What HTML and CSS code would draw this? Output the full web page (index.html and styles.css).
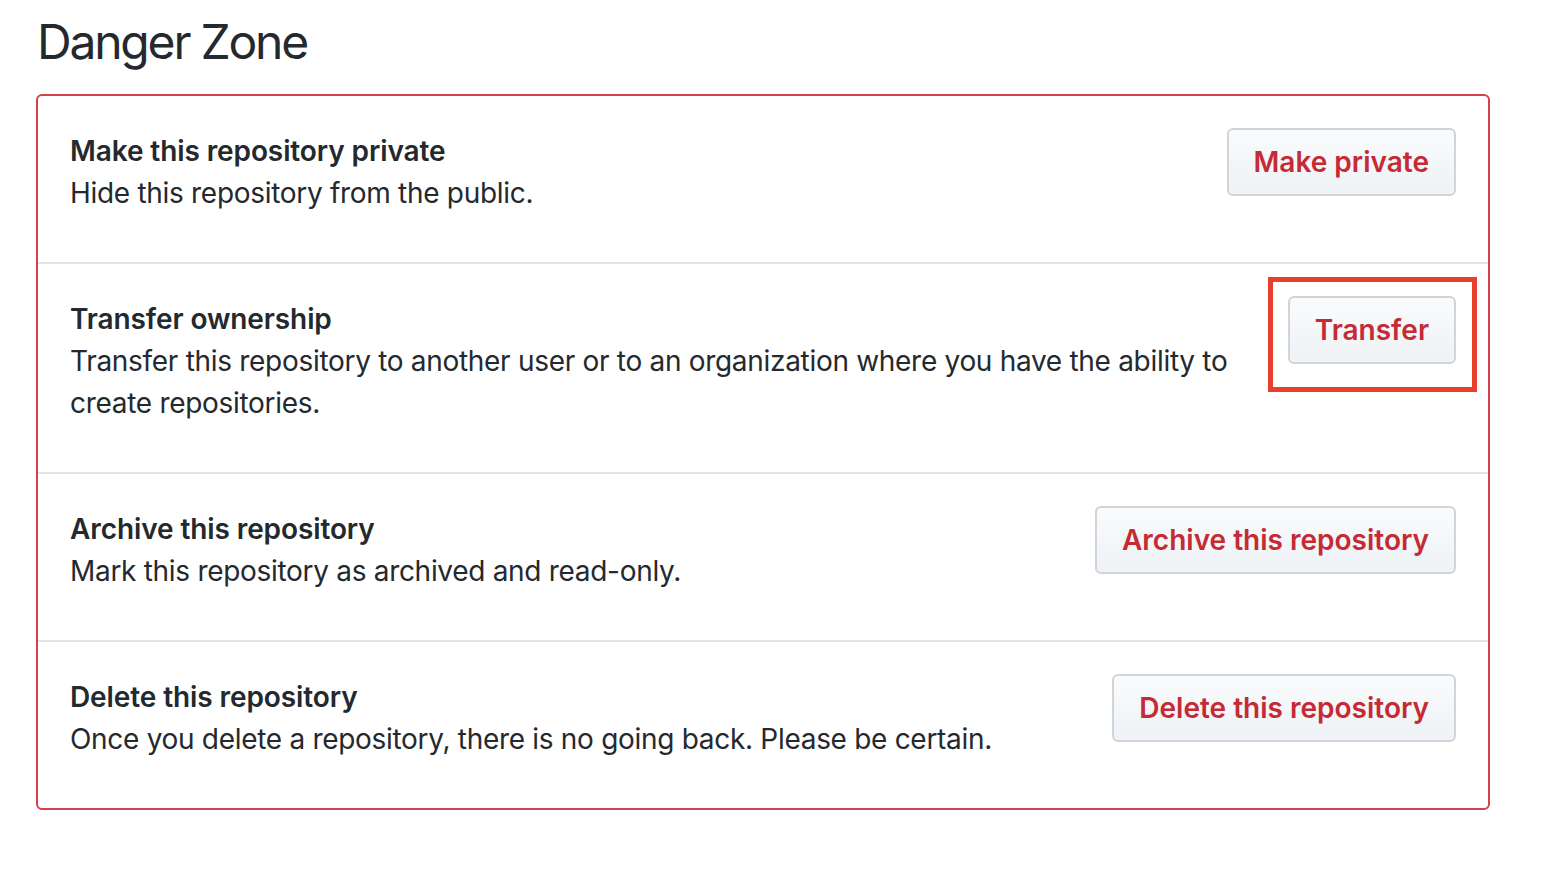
FILE: index.html
```html
<!DOCTYPE html>
<html lang="en">
<head>
    <title>Danger Zone</title>
    <link rel="stylesheet" href="styles.css">
</head>
<body>
    <div class="page">
        <h2 class="zone-title">Danger Zone</h2>
        <div class="danger-box">
            <div class="danger-row">
                <div class="row-text">
                    <strong>Make this repository private</strong>
                    <p>Hide this repository from the public.</p>
                </div>
                <div class="row-action">
                    <button class="btn-danger">Make private</button>
                </div>
            </div>
            <div class="danger-row">
                <div class="row-text">
                    <strong>Transfer ownership</strong>
                    <p>Transfer this repository to another user or to an organization where you have the ability to create repositories.</p>
                </div>
                <div class="row-action">
                    <button class="btn-danger">Transfer</button>
                    <span class="highlight"></span>
                </div>
            </div>
            <div class="danger-row">
                <div class="row-text">
                    <strong>Archive this repository</strong>
                    <p>Mark this repository as archived and read-only.</p>
                </div>
                <div class="row-action">
                    <button class="btn-danger">Archive this repository</button>
                </div>
            </div>
            <div class="danger-row">
                <div class="row-text">
                    <strong>Delete this repository</strong>
                    <p>Once you delete a repository, there is no going back. Please be certain.</p>
                </div>
                <div class="row-action">
                    <button class="btn-danger">Delete this repository</button>
                </div>
            </div>
        </div>
    </div>
</body>
</html>
```

FILE: styles.css
```css
body {
    margin: 0;
    background: #ffffff;
    color: #24292e;
    font-family: Inter, "Liberation Sans", sans-serif;
}
.page {
    padding: 12px 36px 0 36px;
}
.zone-title {
    margin: 0 0 22px 1px;
    font-size: 48px;
    line-height: 60px;
    font-weight: 400;
    letter-spacing: -2.2px;
}
.danger-box {
    width: 1454px;
    box-sizing: border-box;
    border: 2px solid #d4404b;
    border-radius: 6px;
}
.danger-row {
    display: flex;
    align-items: flex-start;
    padding: 32px 32px 48px 32px;
}
.danger-row + .danger-row {
    border-top: 2px solid #e1e4e8;
}
.row-text {
    flex: 1;
    padding-top: 2px;
    font-size: 28px;
    line-height: 42px;
}
.row-text strong {
    display: block;
    font-weight: 600;
    letter-spacing: -0.1px;
}
.row-text p {
    margin: 0;
    letter-spacing: -0.3px;
}
.row-action {
    position: relative;
    margin-left: 32px;
}
.btn-danger {
    display: block;
    padding: 12px 25px;
    font-family: inherit;
    font-size: 28px;
    line-height: 40px;
    font-weight: 600;
    color: #c52a35;
    white-space: nowrap;
    background: linear-gradient(-180deg, #fafbfc 0%, #eff3f6 90%);
    border: 2px solid #d1d5da;
    border-radius: 6px;
}
.highlight {
    position: absolute;
    top: -19px;
    left: -20px;
    right: -21px;
    height: 115px;
    box-sizing: border-box;
    border: 5px solid #e8402a;
}
```
